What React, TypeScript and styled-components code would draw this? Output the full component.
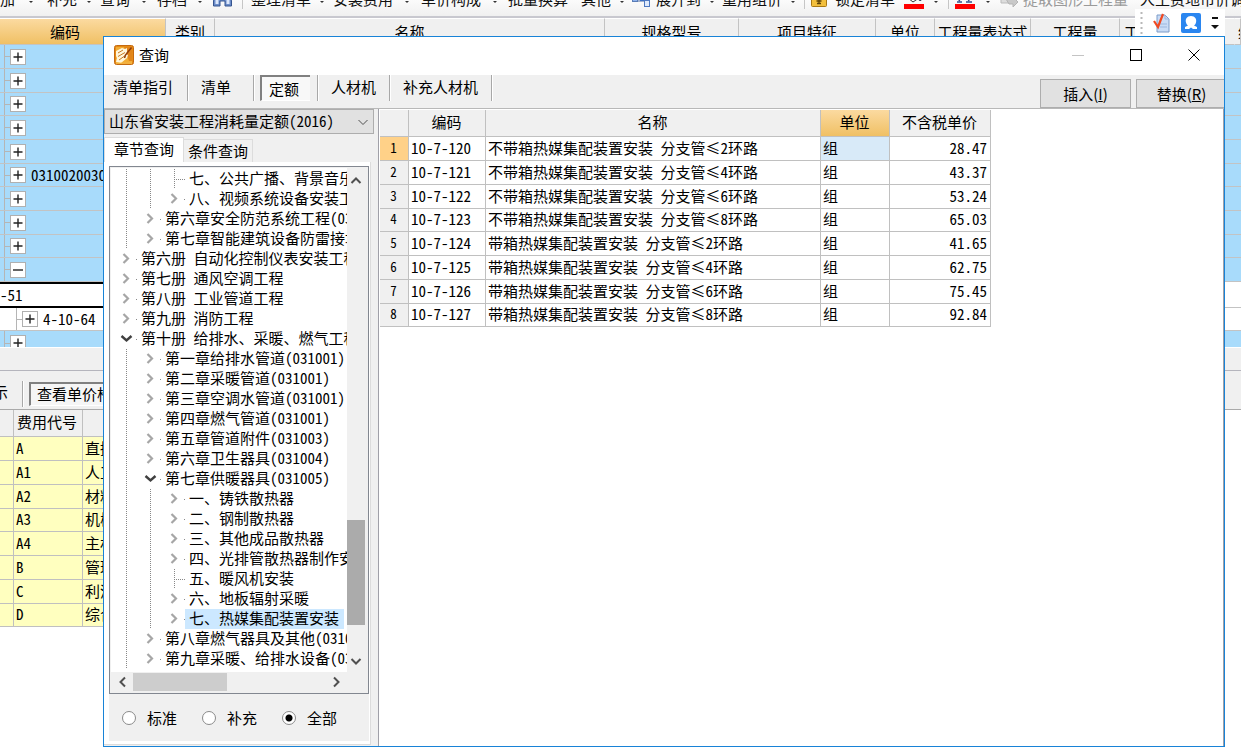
import React from "react";
import styled, { createGlobalStyle, css } from "styled-components";

const Global = createGlobalStyle`
  * { box-sizing: border-box; }
  body { margin: 0; }
  body, button, input, select, table {
    font-family: "Noto Sans Mono CJK SC", "Noto Sans CJK SC", "Liberation Mono", monospace;
    font-size: 15px;
    line-height: 20px;
    color: #000;
  }
`;

const Desktop = styled.div`
  position: relative;
  min-height: 100vh;
  overflow: hidden;
  background: #fff;
`;

/* ---------- main window ---------- */

const Ribbon = styled.div`
  display: flex;
  align-items: flex-end;
  height: 18px;
  padding-bottom: 7px;
  overflow: hidden;
  background: linear-gradient(#fbfbfb, #f0f0f0);
  border-bottom: 2px solid #c8c8cf;
`;

const RibbonSlot = styled.div<{ $w: number }>`
  flex: none;
  display: flex;
  align-items: flex-end;
  width: ${(p) => p.$w}px;
  height: 20px;
`;

const RibbonButton = styled.button<{ $muted?: boolean }>`
  flex: none;
  display: flex;
  height: 20px;
  padding: 0;
  border: 0;
  background: none;
  white-space: nowrap;
  color: ${(p) => (p.$muted ? "#9a9a9a" : "#111")};
`;

const Caret = styled.i`
  width: 0;
  height: 0;
  margin: 0 auto 6px;
  border: 2px solid transparent;
  border-top-color: #333;
  border-bottom: 0;
`;

const RibbonLine = styled.i`
  width: 1px;
  height: 20px;
  background: #c6c6c6;
`;

const Sheet = styled.table`
  table-layout: fixed;
  border-collapse: separate;
  border-spacing: 0;
  width: 100%;
`;

const SheetHead = styled.th<{ $hot?: boolean; $shift?: number; $left?: number }>`
  height: 27px;
  padding: 0 ${(p) => p.$shift ?? 0}px 0 ${(p) => p.$left ?? 0}px;
  overflow: hidden;
  white-space: nowrap;
  font-weight: 400;
  text-align: ${(p) => (p.$left ? "left" : "center")};
  border-top: 1px solid #fff;
  border-right: 1px solid #c3c3c3;
  border-bottom: 1px solid #c3c3c3;
  background: ${(p) => (p.$hot ? "linear-gradient(#fbdaa0, #f0c064)" : "#f0f0f0")};
  &:nth-last-child(2) { border-right-color: #f0f0f0; }
`;

const SheetRow = styled.tr<{ $tone: "blue" | "white" | "active" }>`
  height: 24px;
  &:nth-child(3n) { height: 23px; }
  td {
    padding: 0;
    background: ${(p) => (p.$tone === "blue" ? "#a8dbfb" : "#fff")};
    border-bottom: 1px solid #c3c3c3;
    overflow: hidden;
  }
  ${(p) =>
    p.$tone === "active" &&
    css`
      td { height: 26px; }
      td:first-child { border-top: 2px solid #000; border-bottom: 2px solid #000; }
    `}
`;

const CodeCell = styled.div<{ $depth?: number; $flush?: boolean }>`
  display: flex;
  align-items: center;
  height: 20px;
  padding-left: ${(p) => (p.$flush ? 0 : 4 + (p.$depth ?? 0) * 12)}px;
  white-space: nowrap;
  gap: 5px;
`;

const Expander = styled.span`
  display: flex;
  align-items: center;
  &::before { content: ""; width: 5px; height: 24px; border-left: 1px solid #b5b5b5; background: linear-gradient(#b5b5b5, #b5b5b5) center / 100% 1px no-repeat; }
`;

const ExpanderButton = styled.button`
  display: flex;
  align-items: center;
  justify-content: center;
  width: 16px;
  height: 16px;
  padding: 0;
  background: #fff;
  border: 1px solid #b0b0b0;
`;

const LastRow = styled.div`
  height: 16px;
  padding-top: 2px;
  overflow: hidden;
  background: #a8dbfb;
`;

const SplitBar = styled.div`
  height: 24px;
  background: #f0f0f0;
  border-top: 1px solid #fff;
  border-bottom: 1px solid #b5b5bd;
`;

const DetailBar = styled.div`
  display: flex;
  align-items: center;
  height: 39px;
  padding-top: 7px;
  overflow: hidden;
  background: #f0f0f0;
  border-bottom: 1px solid #aaa;
`;

const DetailTab = styled.button<{ $pressed?: boolean }>`
  height: 24px;
  padding: 0 6px 2px;
  white-space: nowrap;
  border: 0;
  background: none;
  ${(p) =>
    p.$pressed
      ? css`
          margin-left: 5px;
          background: #f5f5f5;
          border: 1px solid #fff;
          border-top: 2px solid #808080;
          border-left: 2px solid #808080;
        `
      : css`
          width: 22px;
          display: flex;
          justify-content: flex-end;
          padding: 0 14px 0 0;
        `}
`;

const Groove = styled.i`
  flex: none;
  width: 2px;
  height: 26px;
  border-left: 1px solid #a8a8a8;
  border-right: 1px solid #fff;
`;

const FeeTable = styled.table`
  table-layout: fixed;
  width: 300px;
  border-collapse: separate;
  border-spacing: 0;
  th, td {
    height: 24px;
    padding: 0 2px 2px;
    text-align: left;
    font-weight: 400;
    border-right: 1px solid #c0c0c0;
    border-bottom: 1px solid #c0c0c0;
  }
  th { height: 27px; padding-left: 3px; background: #f0f0f0; }
  td { background: #ffffbf; }
  tbody tr:nth-child(4n) td { height: 23px; }
`;

const FloatBar = styled.div`
  position: absolute;
  top: 9px;
  right: 16px;
  display: flex;
  align-items: center;
  height: 28px;
  width: 90px;
  padding: 0 6px 0 5px;
  background: #fff;
  justify-content: space-between;
`;

/* ---------- query dialog ---------- */

const Dialog = styled.section`
  position: absolute;
  inset: 36px 16px 5px 103px;
  display: flex;
  flex-direction: column;
  border: 1px solid #1883d7;
  background: #f0f0f0;
  overflow: hidden;
`;

const TitleBar = styled.header`
  flex: none;
  display: flex;
  align-items: center;
  gap: 5px;
  height: 38px;
  padding: 0 4px 2px 10px;
  background: #fff;
`;

const Title = styled.h1`
  flex: 1;
  margin: 0;
  font-size: 15px;
  font-weight: 400;
`;

const WindowButton = styled.button`
  display: flex;
  align-items: center;
  justify-content: center;
  width: 53px;
  height: 36px;
  padding: 0;
  border: 0;
  background: none;
`;

const ModeBar = styled.nav`
  flex: none;
  display: flex;
  align-items: flex-start;
  height: 34px;
  border-bottom: 1px solid #b8b8b8;
`;

const Mode = styled.button<{ $pressed?: boolean; $wide?: boolean }>`
  height: 26px;
  padding: 0 ${(p) => (p.$wide ? 22 : 13)}px 2px 12px;
  border: 0;
  background: none;
  white-space: nowrap;
  &:first-child { padding-left: 9px; padding-right: 14px; }
  ${(p) =>
    p.$pressed &&
    css`
      margin: 0 7px 0 5px;
      padding: 2px 11px 2px 7px;
      background: #f8f8f8;
      border-top: 2px solid #808080;
      border-left: 2px solid #808080;
      border-bottom: 1px solid #fff;
    `}
`;

const Actions = styled.div`
  display: flex;
  gap: 5px;
  margin: 0 -3px 0 auto;
  padding-top: 4px;
`;

const ActionButton = styled.button`
  width: 91px;
  height: 29px;
  padding: 0;
  font-family: "Noto Sans CJK SC", sans-serif;
  background: #e1e1e1;
  border: 1px solid #adadad;
  white-space: nowrap;
`;

const Body = styled.div`
  flex: 1;
  display: grid;
  grid-template-columns: 270px 1fr;
  gap: 4px;
  min-height: 0;
`;

const Side = styled.div`
  display: flex;
  flex-direction: column;
  min-height: 0;
`;

const Picker = styled.label`
  position: relative;
  display: flex;
  align-items: center;
  svg { position: absolute; right: 5px; pointer-events: none; }
`;

const PickerSelect = styled.select`
  appearance: none;
  width: 100%;
  height: 25px;
  padding: 0 4px 2px;
  background: #e1e1e1;
  border: 1px solid #adadad;
  border-radius: 0;
`;

const TabRow = styled.div`
  display: flex;
  align-items: flex-end;
  height: 28px;
`;

const Tab = styled.button<{ $active?: boolean }>`
  height: ${(p) => (p.$active ? 25 : 23)}px;
  padding: 0 ${(p) => (p.$active ? 9 : 4)}px ${(p) => (p.$active ? 2 : 0)}px;
  border: 1px solid #dcdcdc;
  border-bottom: 0;
  border-left-width: ${(p) => (p.$active ? 1 : 0)}px;
  background: ${(p) => (p.$active ? "#fff" : "#f0f0f0")};
  white-space: nowrap;
`;

const TabPage = styled.div`
  flex: 1;
  display: flex;
  flex-direction: column;
  min-height: 0;
  margin: 0 3px 1px 0;
  padding: 4px 1px 3px 5px;
  background: #fff;
  border-right: 1px solid #dcdcdc;
  border-bottom: 1px solid #dcdcdc;
`;

const TreeBox = styled.div`
  flex: 1;
  display: grid;
  grid-template-columns: minmax(0, 1fr) 18px;
  grid-template-rows: minmax(0, 1fr) 19px;
  min-height: 0;
  padding: 1px 3px 2px 1px;
  border: 1px solid #828790;
  background: #f0f0f0;
`;

const TreeList = styled.ul`
  margin: 0;
  padding: 1px 0 0;
  list-style: none;
  overflow: hidden;
  background: #fff;
`;

const TreeItem = styled.li`
  display: flex;
  align-items: center;
  height: 20px;
  padding-left: 3px;
  white-space: nowrap;
`;

const Guide = styled.i`
  flex: none;
  width: 24px;
  height: 20px;
  background: repeating-linear-gradient(#888 0 1px, transparent 1px 2px) 12px 0 / 1px 100% no-repeat;
`;

const Knob = styled.span`
  flex: none;
  width: 24px;
  height: 20px;
`;

const TreeText = styled.span<{ $selected?: boolean }>`
  padding: 0 5px 2px 4px;
  margin-left: -1px;
  line-height: 18px;
  background: ${(p) => (p.$selected ? "#cce8ff" : "none")};
`;

const VBar = styled.div`
  display: flex;
  flex-direction: column;
  align-items: center;
  padding: 7px 0 5px;
`;

const VThumb = styled.div`
  width: 18px;
  height: 105px;
  margin: auto 0 30px;
  background: #ababab;
`;

const HBar = styled.div`
  display: flex;
  align-items: center;
  padding: 1px 5px 0 6px;
`;

const HThumb = styled.div`
  width: 94px;
  height: 18px;
  margin: 0 auto 0 4px;
  background: #cdcdcd;
`;

const Scope = styled.div`
  flex: none;
  display: flex;
  align-items: center;
  gap: 25px;
  height: 47px;
  padding-left: 13px;
  background: #f0f0f0;
`;

const ScopeChoice = styled.label`
  display: flex;
  align-items: center;
  gap: 11px;
`;

const Radio = styled.input`
  appearance: none;
  width: 14px;
  height: 14px;
  margin: 0;
  border: 1px solid #8a8a8a;
  border-radius: 50%;
  background: #fff;
  &:checked { background: radial-gradient(circle, #000 0 3px, #fff 4px); }
`;

const ResultPane = styled.div`
  padding: 1px;
  background: #fff;
  border-left: 1px solid #a0a0a8;
  border-right: 1px solid #a0a0a8;
  overflow: hidden;
`;

const ResultTable = styled.table`
  table-layout: fixed;
  width: 611px;
  border-collapse: separate;
  border-spacing: 0;
  th, td {
    height: 24px;
    padding: 0 3px 2px 2px;
    font-weight: 400;
    white-space: nowrap;
    border-right: 1px solid #c0c0c0;
    border-bottom: 1px solid #c0c0c0;
  }
  thead th { height: 27px; }
  tbody tr:nth-child(4n) > * { height: 23px; }
`;

const HeadCell = styled.th<{ $hot?: boolean }>`
  background: ${(p) => (p.$hot ? "linear-gradient(#fbdaa0, #f0c064)" : "#f0f0f0")};
`;

const IndexCell = styled.th<{ $hot?: boolean }>`
  font-size: 13px;
  background: ${(p) => (p.$hot ? "#ffd188" : "#f0f0f0")};
`;

const DataCell = styled.td<{ $right?: boolean; $focus?: boolean }>`
  text-align: ${(p) => (p.$right ? "right" : "left")};
  background: ${(p) => (p.$focus ? "#d8eaf8" : "#fff")};
`;

/* ---------- drawings ---------- */

const Chevron = ({ dir, color = "#505050", w = 2 }: { dir: "up" | "down" | "left" | "right"; color?: string; w?: number }) => {
  const d = { up: "M1.5 8 6 3.5 10.5 8", down: "M1.5 4 6 8.5 10.5 4", left: "M8 1.5 3.5 6 8 10.5", right: "M4 1.5 8.5 6 4 10.5" }[dir];
  return (
    <svg width="12" height="12" viewBox="0 0 12 12" fill="none" stroke={color} strokeWidth={w}>
      <path d={d} />
    </svg>
  );
};

const TreeKnob = ({ state }: { state: "open" | "closed" | "leaf" }) => (
  <svg width="24" height="20" fill="none">
    {state === "closed" && <path d="M9.500 5 14 9.500 9.500 14" stroke="#a6a6a6" strokeWidth="2.200" />}
    {state === "open" && <path d="M7.500 7 12.500 11.500 17.500 7" stroke="#404040" strokeWidth="2.400" />}
    {state === "leaf" ? (
      <path d="M12.5 0V20M14 10.5H23" stroke="#888" strokeDasharray="1 1" />
    ) : (
      <path d="M22 10.5h1" stroke="#888" />
    )}
  </svg>
);

const AppLogo = () => (
  <svg width="20" height="20" viewBox="0 0 20 20">
    <rect x=".5" y=".5" width="19" height="19" rx="2" fill="#e58a16" stroke="#c56a10" />
    <rect x="2" y="2" width="16" height="15" fill="#f2ad35" />
    <path d="M10 2h8v14h-3z" fill="#e1851a" />
    <path d="M2 6l6-3 3 1 2-1v4l-1 2 2 1-1 3-6 5-5-1 1-4-1-2z" fill="#fff6dc" />
    <path d="M4 8l5-3M4 11.500l7-4M5 15l7-5" stroke="#c57a24" strokeWidth="1" />
    <path d="M17.5 2.500 11.500 10l-1 3" stroke="#8e3c0c" strokeWidth="1.500" fill="none" />
    <path d="M2 18h16" stroke="#ffd768" />
  </svg>
);

const Binoculars = () => (
  <svg width="19" height="20" viewBox="0 0 19 20">
    <path d="M3 3h4v4h5V3h4l2.500 9v5H12v-5H7v5H.5v-5z" fill="#6c8dca" stroke="#35548f" />
    <path d="M2.500 11h3v4h-3zM13.500 11h3v4h-3z" fill="#dce8fb" />
  </svg>
);

const TreeExpand = () => (
  <svg width="19" height="20" viewBox="0 0 19 20">
    <rect x=".5" y="8.500" width="5" height="4" fill="#8eb3ee" stroke="#5a7cb5" />
    <path d="M6 12h6" stroke="#49699f" fill="none" />
    <rect x="8" y="4" width="9" height="8" fill="#3f72c4" />
    <rect x="12.500" y="11.500" width="5" height="6" fill="#dfeafc" stroke="#4f79c0" />
  </svg>
);

const Lock = () => (
  <svg width="17" height="20" viewBox="0 0 17 20">
    <rect x=".5" y="5.500" width="15" height="12" rx="1" fill="#f2bf3c" stroke="#a87814" />
    <path d="M8 8v7M5.500 12h5M6 14.500h4" stroke="#5c4208" strokeWidth="1.300" />
  </svg>
);

const PaintFill = () => (
  <svg width="20" height="20" viewBox="0 0 20 20">
    <path d="M4 9l6-5 5 5-6 4z" fill="#fff" stroke="#333" />
    <path d="M16 8c2 2 2 4 0 4s-1-2 0-4z" fill="#345" />
    <rect y="15" width="20" height="5" fill="#f00" />
  </svg>
);

const TextColor = () => (
  <svg width="20" height="20" viewBox="0 0 20 20">
    <path d="M4 12 9 1l5 11M6 8h6M2 13h5M11 13h6" stroke="#34528c" strokeWidth="1.600" fill="none" />
    <rect y="15" width="20" height="5" fill="#f00" />
  </svg>
);

const Extract = () => (
  <svg width="19" height="20" viewBox="0 0 19 20">
    <path d="M1 4h10v10H1z" fill="#ddd" stroke="#bbb" />
    <path d="M6 10h6V7l6 6-5 5v-3H9z" fill="#c9c9c9" stroke="#b5b5b5" />
  </svg>
);

const GripDots = () => (
  <svg width="3" height="26" viewBox="0 0 3 26">
    <path d="M1.500 2v24" stroke="#b8b8b8" strokeWidth="2" strokeDasharray="2 3" />
  </svg>
);

const DocCheck = () => (
  <svg width="17" height="20" viewBox="0 0 17 20">
    <path d="M4 2h8l4 4v13H4z" fill="#c9dcf6" stroke="#7d9cc9" />
    <path d="M12 2v4h4M7 11h7M7 14h7" stroke="#9db7de" fill="none" />
    <path d="M1 8l4 6 5-13" stroke="#f04a22" strokeWidth="2.200" fill="none" />
  </svg>
);

const UserBadge = () => (
  <svg width="20" height="20" viewBox="0 0 20 20">
    <rect width="20" height="20" rx="2" fill="#2a86f0" />
    <path d="M10 3c-4 0-6 3-5 6.500.3 1.500 1.300 2.500 2 3L4 14v2h4l2-1.500 2 1.500h4v-2l-3-1.500c.7-.5 1.700-1.500 2-3C16 6 14 3 10 3z" fill="#fff" />
  </svg>
);

const Overflow = () => (
  <svg width="8" height="14" viewBox="0 0 8 14">
    <path d="M1 1h6v2H1zM0 9h8l-4 4z" fill="#111" />
  </svg>
);

const Sign = ({ minus }: { minus?: boolean }) => (
  <svg width="10" height="10" viewBox="0 0 10 10">
    <path d={minus ? "M0 5h10" : "M.5 5h9M5 .5v9"} stroke="#222" strokeWidth="1.400" />
  </svg>
);

/* ---------- data ---------- */

type Slot = { w: number; text?: string; icon?: React.ReactNode; caret?: boolean; line?: boolean; muted?: boolean; name?: string };

const ribbon: Slot[] = [
  { w: 47, text: "加", caret: true, name: "添加" },
  { w: 53, text: "补充", caret: true },
  { w: 57, text: "查询", caret: true },
  { w: 56, text: "存档", caret: true },
  { w: 29, icon: <Binoculars />, name: "查找" },
  { w: 9, line: true },
  { w: 82, text: "整理清单", caret: true },
  { w: 88, text: "安装费用", caret: true },
  { w: 87, text: "单价构成", caret: true },
  { w: 73, text: "批量换算" },
  { w: 51, text: "其他", caret: true },
  { w: 24, icon: <TreeExpand />, name: "展开" },
  { w: 66, text: "展开到", caret: true },
  { w: 82, text: "重用组价", caret: true },
  { w: 7, line: true },
  { w: 24, icon: <Lock />, name: "锁定" },
  { w: 69, text: "锁定清单" },
  { w: 44, icon: <PaintFill />, caret: true, name: "填充颜色" },
  { w: 7, line: true },
  { w: 45, icon: <TextColor />, caret: true, name: "字体颜色" },
  { w: 23, icon: <Extract />, name: "提取" },
  { w: 117, text: "提取图形工程量", muted: true },
  { w: 120, text: "人工费地市价调整" },
];

const sheetCols = [
  { w: 166, t: "编码", hot: true, shift: 35 },
  { w: 49, t: "类别" },
  { w: 390, t: "名称" },
  { w: 134, t: "规格型号" },
  { w: 137, t: "项目特征" },
  { w: 59, t: "单位" },
  { w: 96, t: "工程量表达式" },
  { w: 89, t: "工程量" },
  { w: 115, t: "工程量", left: 4 },
];

const sheetRows = ["", "", "", "", "", "0310020030", "", "", ""];

const fees = [
  ["A", "直接费"],
  ["A1", "人工费"],
  ["A2", "材料费"],
  ["A3", "机械费"],
  ["A4", "主材费"],
  ["B", "管理费"],
  ["C", "利润"],
  ["D", "综合单价"],
];

type Node = { level: 1 | 2 | 3; text: string; state?: "open" | "leaf"; selected?: boolean };

const tree: Node[] = [
  { level: 3, text: "七、公共广播、背景音乐系统", state: "leaf" },
  { level: 3, text: "八、视频系统设备安装工程" },
  { level: 2, text: "第六章安全防范系统工程(030506)" },
  { level: 2, text: "第七章智能建筑设备防雷接地" },
  { level: 1, text: "第六册 自动化控制仪表安装工程" },
  { level: 1, text: "第七册 通风空调工程" },
  { level: 1, text: "第八册 工业管道工程" },
  { level: 1, text: "第九册 消防工程" },
  { level: 1, text: "第十册 给排水、采暖、燃气工程", state: "open" },
  { level: 2, text: "第一章给排水管道(031001)" },
  { level: 2, text: "第二章采暖管道(031001)" },
  { level: 2, text: "第三章空调水管道(031001)" },
  { level: 2, text: "第四章燃气管道(031001)" },
  { level: 2, text: "第五章管道附件(031003)" },
  { level: 2, text: "第六章卫生器具(031004)" },
  { level: 2, text: "第七章供暖器具(031005)", state: "open" },
  { level: 3, text: "一、铸铁散热器" },
  { level: 3, text: "二、钢制散热器" },
  { level: 3, text: "三、其他成品散热器" },
  { level: 3, text: "四、光排管散热器制作安装" },
  { level: 3, text: "五、暖风机安装", state: "leaf" },
  { level: 3, text: "六、地板辐射采暖" },
  { level: 3, text: "七、热媒集配装置安装", selected: true },
  { level: 2, text: "第八章燃气器具及其他(031007)" },
  { level: 2, text: "第九章采暖、给排水设备(031006)" },
];

const results = [
  ["10-7-120", "不带箱热媒集配装置安装 分支管≤2环路", "28.47"],
  ["10-7-121", "不带箱热媒集配装置安装 分支管≤4环路", "43.37"],
  ["10-7-122", "不带箱热媒集配装置安装 分支管≤6环路", "53.24"],
  ["10-7-123", "不带箱热媒集配装置安装 分支管≤8环路", "65.03"],
  ["10-7-124", "带箱热媒集配装置安装 分支管≤2环路", "41.65"],
  ["10-7-125", "带箱热媒集配装置安装 分支管≤4环路", "62.75"],
  ["10-7-126", "带箱热媒集配装置安装 分支管≤6环路", "75.45"],
  ["10-7-127", "带箱热媒集配装置安装 分支管≤8环路", "92.84"],
];

/* ---------- views ---------- */

const Toggle = ({ minus }: { minus?: boolean }) => (
  <Expander>
    <ExpanderButton aria-label={minus ? "折叠" : "展开"}>
      <Sign minus={minus} />
    </ExpanderButton>
  </Expander>
);

const MainWindow = () => (
  <>
    <Ribbon>
      {ribbon.map((s, i) => (
        <RibbonSlot key={i} $w={s.w}>
          {s.line ? <RibbonLine /> : (
            <RibbonButton $muted={s.muted} aria-label={s.name}>{s.icon ?? s.text}</RibbonButton>
          )}
          {s.caret && <Caret />}
        </RibbonSlot>
      ))}
    </Ribbon>
    <Sheet>
      <colgroup>
        {sheetCols.map((c, i) => <col key={i} style={{ width: c.w }} />)}
        <col />
      </colgroup>
      <thead>
        <tr>
          {sheetCols.map((c, i) => (
            <SheetHead key={i} $hot={c.hot} $shift={c.shift} $left={c.left}>{c.t}</SheetHead>
          ))}
          <SheetHead $left={3}>综</SheetHead>
        </tr>
      </thead>
      <tbody>
        {sheetRows.map((code, i) => (
          <SheetRow key={i} $tone="blue">
            <td><CodeCell><Toggle />{code}</CodeCell></td>
            <td colSpan={9} />
          </SheetRow>
        ))}
        <SheetRow $tone="blue">
          <td><CodeCell><Toggle minus /></CodeCell></td>
          <td colSpan={9} />
        </SheetRow>
        <SheetRow $tone="active">
          <td><CodeCell $flush>-51</CodeCell></td>
          <td colSpan={9} />
        </SheetRow>
        <SheetRow $tone="white">
          <td><CodeCell $depth={1}><Toggle />4-10-64</CodeCell></td>
          <td colSpan={9} />
        </SheetRow>
      </tbody>
    </Sheet>
    <LastRow><CodeCell><Toggle /></CodeCell></LastRow>
    <SplitBar />
    <DetailBar>
      <DetailTab>显示</DetailTab>
      <Groove />
      <DetailTab $pressed>查看单价构成</DetailTab>
    </DetailBar>
    <FeeTable>
      <colgroup>
        <col style={{ width: 14 }} />
        <col style={{ width: 69 }} />
        <col />
      </colgroup>
      <thead>
        <tr><th /><th>费用代号</th><th /></tr>
      </thead>
      <tbody>
        {fees.map(([code, name]) => (
          <tr key={code}><td /><td>{code}</td><td>{name}</td></tr>
        ))}
      </tbody>
    </FeeTable>
    <FloatBar>
      <GripDots />
      <DocCheck />
      <UserBadge />
      <Overflow />
    </FloatBar>
  </>
);

const Tree = () => (
  <TreeBox>
    <TreeList>
      {tree.map((n, i) => (
        <TreeItem key={i}>
          {n.level > 1 && <Guide />}
          {n.level > 2 && <Guide />}
          <Knob><TreeKnob state={n.state ?? "closed"} /></Knob>
          <TreeText $selected={n.selected}>{n.text}</TreeText>
        </TreeItem>
      ))}
    </TreeList>
    <VBar>
      <Chevron dir="up" />
      <VThumb />
      <Chevron dir="down" />
    </VBar>
    <HBar>
      <Chevron dir="left" />
      <HThumb />
      <Chevron dir="right" />
    </HBar>
  </TreeBox>
);

const QueryDialog = () => (
  <Dialog role="dialog" aria-label="查询">
    <TitleBar>
      <AppLogo />
      <Title>查询</Title>
      <WindowButton aria-label="最小化">
        <svg width="12" height="12"><path d="M0 6.5h12" stroke="#c4c4c4" /></svg>
      </WindowButton>
      <WindowButton aria-label="最大化">
        <svg width="12" height="12"><rect x=".5" y=".5" width="11" height="11" fill="none" stroke="#000" /></svg>
      </WindowButton>
      <WindowButton aria-label="关闭">
        <svg width="12" height="12"><path d="M.5.5l11 11M11.500.5l-11 11" stroke="#000" /></svg>
      </WindowButton>
    </TitleBar>
    <ModeBar>
      <Mode>清单指引</Mode>
      <Groove />
      <Mode $wide>清单</Mode>
      <Groove />
      <Mode $pressed>定额</Mode>
      <Groove />
      <Mode>人材机</Mode>
      <Groove />
      <Mode>补充人材机</Mode>
      <Groove />
      <Actions>
        <ActionButton>插入(<u>I</u>)</ActionButton>
        <ActionButton>替换(<u>R</u>)</ActionButton>
      </Actions>
    </ModeBar>
    <Body>
      <Side>
        <Picker>
          <PickerSelect aria-label="定额库">
            <option>山东省安装工程消耗量定额(2016)</option>
          </PickerSelect>
          <Chevron dir="down" w={1} />
        </Picker>
        <TabRow>
          <Tab $active>章节查询</Tab>
          <Tab>条件查询</Tab>
        </TabRow>
        <TabPage>
          <Tree />
          <Scope role="radiogroup" aria-label="范围">
            <ScopeChoice><Radio type="radio" name="scope" />标准</ScopeChoice>
            <ScopeChoice><Radio type="radio" name="scope" />补充</ScopeChoice>
            <ScopeChoice><Radio type="radio" name="scope" defaultChecked />全部</ScopeChoice>
          </Scope>
        </TabPage>
      </Side>
      <ResultPane>
        <ResultTable>
          <colgroup>
            <col style={{ width: 29 }} />
            <col style={{ width: 77 }} />
            <col style={{ width: 335 }} />
            <col style={{ width: 69 }} />
            <col />
          </colgroup>
          <thead>
            <tr>
              <HeadCell />
              <HeadCell>编码</HeadCell>
              <HeadCell>名称</HeadCell>
              <HeadCell $hot>单位</HeadCell>
              <HeadCell>不含税单价</HeadCell>
            </tr>
          </thead>
          <tbody>
            {results.map(([code, name, price], i) => (
              <tr key={code}>
                <IndexCell $hot={i === 0}>{i + 1}</IndexCell>
                <DataCell>{code}</DataCell>
                <DataCell>{name}</DataCell>
                <DataCell $focus={i === 0}>组</DataCell>
                <DataCell $right>{price}</DataCell>
              </tr>
            ))}
          </tbody>
        </ResultTable>
      </ResultPane>
    </Body>
  </Dialog>
);

export default function App() {
  return (
    <Desktop>
      <Global />
      <MainWindow />
      <QueryDialog />
    </Desktop>
  );
}
